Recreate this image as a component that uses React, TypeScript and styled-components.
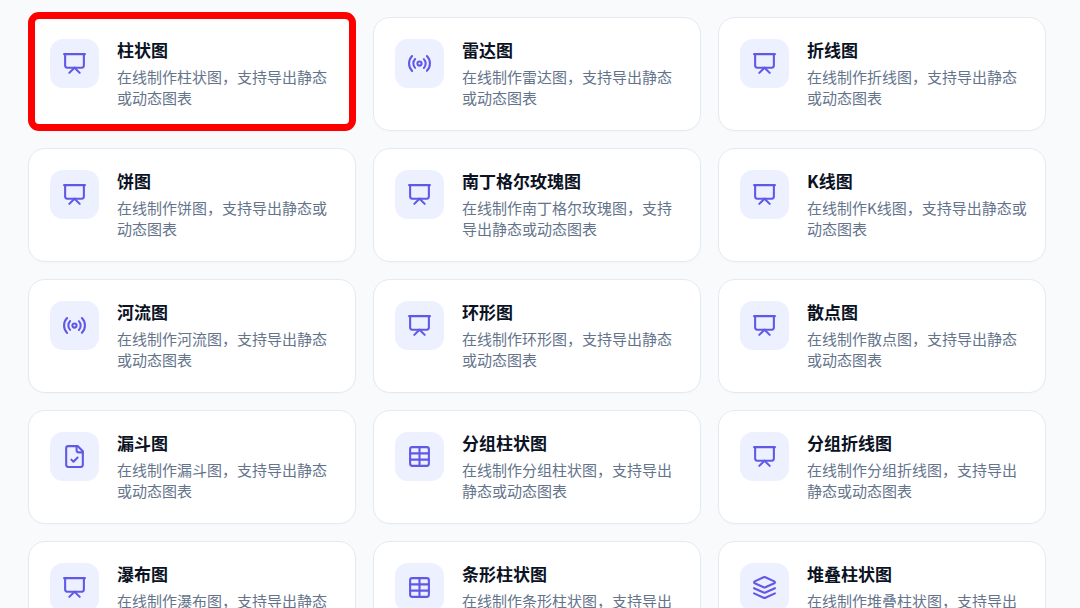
import React from "react";
import styled, { createGlobalStyle } from "styled-components";

const GlobalStyle = createGlobalStyle`
  *, *::before, *::after { box-sizing: border-box; }
  html { scrollbar-width: none; }
  body {
    margin: 0;
    background: #f9fafc;
    font-family: "Noto Sans CJK SC", "Noto Sans", sans-serif;
  }
`;

const Gallery = styled.main`
  display: grid;
  grid-template-columns: repeat(3, minmax(0, 1fr));
  gap: 17px;
  padding: 17px 34px 17px 28px;
`;

const Card = styled.a<{ $marked?: boolean }>`
  position: relative;
  display: flex;
  align-items: flex-start;
  gap: 18px;
  padding: 21px 15px 22px 21px;
  border: 1px solid #e6eaf0;
  border-radius: 17px;
  background: #fff;
  color: inherit;
  text-decoration: none;
  box-shadow: 0 1px 3px rgba(15, 23, 42, 0.02);

  ${({ $marked }) =>
    $marked &&
    `
    &::after {
      content: "";
      position: absolute;
      inset: -6px -1px -1px;
      border: 7px solid #ff0000;
      border-radius: 11px;
    }
  `}
`;

const IconTile = styled.span`
  display: flex;
  flex: none;
  align-items: center;
  justify-content: center;
  width: 49px;
  height: 49px;
  border-radius: 13px;
  background: #edf0ff;
  color: #6059e6;
`;

const CardText = styled.div`
  display: flex;
  flex: 1;
  flex-direction: column;
  gap: 6px;
  min-width: 0;
`;

const Title = styled.h3`
  margin: 0;
  color: #0b1224;
  font-size: 17px;
  font-weight: 700;
  line-height: 21px;
`;

const Description = styled.p`
  margin: 0;
  color: #64748b;
  font-size: 15px;
  line-height: 21px;
`;

const Glyph = styled.svg`
  width: 25px;
  height: 25px;
  fill: none;
  stroke: currentColor;
  stroke-width: 2;
  stroke-linecap: round;
  stroke-linejoin: round;
`;

const icons = {
  board: (
    <>
      <path d="M2 3h20" />
      <path d="M21 3v11a2 2 0 0 1-2 2H5a2 2 0 0 1-2-2V3" />
      <path d="m7 21 5-5 5 5" />
    </>
  ),
  signal: (
    <>
      <path d="M4.9 19.1C1 15.2 1 8.8 4.9 4.9" />
      <path d="M7.8 16.2c-2.3-2.3-2.3-6.1 0-8.5" />
      <circle cx="12" cy="12" r="2" />
      <path d="M16.2 7.8c2.3 2.3 2.3 6.1 0 8.5" />
      <path d="M19.1 4.9C23 8.8 23 15.1 19.1 19" />
    </>
  ),
  document: (
    <>
      <path d="M15 2H6a2 2 0 0 0-2 2v16a2 2 0 0 0 2 2h12a2 2 0 0 0 2-2V7Z" />
      <path d="M14 2v4a2 2 0 0 0 2 2h4" />
      <path d="m9 15 2 2 4-4" />
    </>
  ),
  grid: (
    <>
      <rect x="3" y="3" width="18" height="18" rx="2" />
      <path d="M12 3v18M3 9h18M3 15h18" />
    </>
  ),
  stack: (
    <>
      <path d="m12.83 2.18a2 2 0 0 0-1.66 0L2.6 6.08a1 1 0 0 0 0 1.83l8.58 3.91a2 2 0 0 0 1.66 0l8.58-3.9a1 1 0 0 0 0-1.83Z" />
      <path d="m22 17.65-9.17 4.16a2 2 0 0 1-1.66 0L2 17.65" />
      <path d="m22 12.65-9.17 4.16a2 2 0 0 1-1.66 0L2 12.65" />
    </>
  ),
};

type Chart = { name: string; icon: keyof typeof icons; marked?: boolean };

const charts: Chart[] = [
  { name: "柱状图", icon: "board", marked: true },
  { name: "雷达图", icon: "signal" },
  { name: "折线图", icon: "board" },
  { name: "饼图", icon: "board" },
  { name: "南丁格尔玫瑰图", icon: "board" },
  { name: "K线图", icon: "board" },
  { name: "河流图", icon: "signal" },
  { name: "环形图", icon: "board" },
  { name: "散点图", icon: "board" },
  { name: "漏斗图", icon: "document" },
  { name: "分组柱状图", icon: "grid" },
  { name: "分组折线图", icon: "board" },
  { name: "瀑布图", icon: "board" },
  { name: "条形柱状图", icon: "grid" },
  { name: "堆叠柱状图", icon: "stack" },
];

export default function App() {
  return (
    <>
      <GlobalStyle />
      <Gallery lang="zh-CN">
        {charts.map(({ name, icon, marked }) => (
          <Card key={name} href="#" $marked={marked}>
            <IconTile>
              <Glyph viewBox="0 0 24 24" aria-hidden="true">
                {icons[icon]}
              </Glyph>
            </IconTile>
            <CardText>
              <Title>{name}</Title>
              <Description>{`在线制作${name}，支持导出静态或动态图表`}</Description>
            </CardText>
          </Card>
        ))}
      </Gallery>
    </>
  );
}
